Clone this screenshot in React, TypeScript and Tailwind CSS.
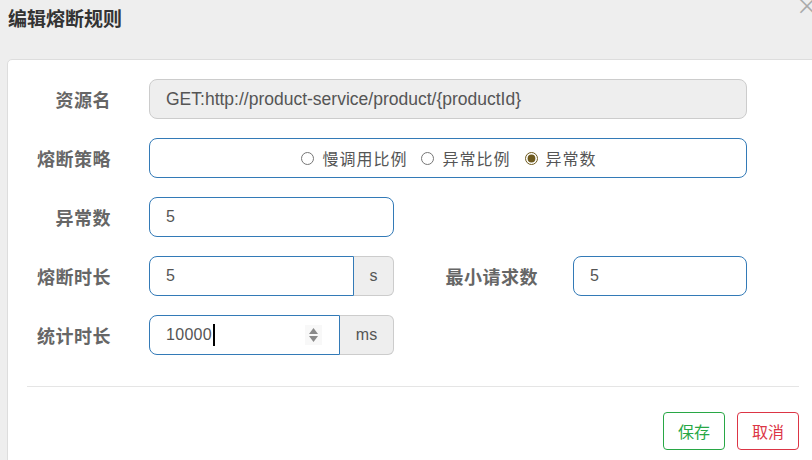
import React, { useState } from 'react';

const labelCls =
  'w-[84px] shrink-0 text-right text-[18px] font-bold text-[#666] leading-none tracking-[0.5px]';
const inputCls =
  'h-[40px] rounded-[8px] border border-[#337ab7] bg-white px-[16px] text-[16px] text-[#555] outline-none font-["Liberation_Sans",Arial,sans-serif]';
const addonCls =
  'flex h-[40px] items-center justify-center rounded-r-[6px] border border-l-0 border-[#ccc] bg-[#eee] text-[16px] text-[#555] font-["Liberation_Sans",Arial,sans-serif]';

const strategies = [
  { id: 'slow', label: '慢调用比例' },
  { id: 'ratio', label: '异常比例' },
  { id: 'count', label: '异常数' },
];

function Spinner() {
  return (
    <div className="absolute right-[18px] top-[10px] flex h-[20px] w-[17px] flex-col items-center justify-center gap-[2px] bg-[#f8f8f8]">
      <svg width="9" height="6" viewBox="0 0 9 6">
        <path d="M4.5 0 L9 6 L0 6 Z" fill="#8a8a8a" />
      </svg>
      <svg width="9" height="6" viewBox="0 0 9 6">
        <path d="M0 0 L9 0 L4.5 6 Z" fill="#8a8a8a" />
      </svg>
    </div>
  );
}

export default function App() {
  const [strategy, setStrategy] = useState('count');

  return (
    <div className='relative h-[460px] w-[812px] overflow-hidden bg-[#eee] font-["Noto_Sans_CJK_SC",sans-serif]'>
      <span className="absolute right-[-6px] top-[-7px] text-[22px] leading-none text-[#aaa]">×</span>

      <div className="h-[59px] px-[8px] pt-[6px]">
        <h4 className="text-[19px] font-bold leading-[24px] text-[#333] whitespace-nowrap">编辑熔断规则</h4>
      </div>

      <div className="ml-[7px] h-[420px] w-[813px] rounded-tl-[5px] border border-[#ddd] bg-white px-[19px] pt-[19px]">
        <form className="flex flex-col gap-[19px]" onSubmit={e => e.preventDefault()}>
          <div className="flex items-center gap-[38px]">
            <label className={labelCls}>资源名</label>
            <input
              className="h-[40px] w-[598px] rounded-[8px] border border-[#ccc] bg-[#eee] px-[16px] text-[17.5px] text-[#555] outline-none font-['Liberation_Sans',Arial,sans-serif]"
              value="GET:http://product-service/product/{productId}"
              disabled
              readOnly
            />
          </div>

          <div className="flex items-center gap-[38px]">
            <label className={labelCls}>熔断策略</label>
            <div className="flex h-[40px] w-[598px] items-center justify-center gap-[14px] rounded-[8px] border border-[#337ab7] bg-white pl-[2px]">
              {strategies.map(s => (
                <label key={s.id} className="flex items-center gap-[8px] text-[16px] tracking-[1px] text-[#555]">
                  <input
                    type="radio"
                    name="grade"
                    className="m-0 h-[13px] w-[13px] accent-[#6e5a1f]"
                    checked={strategy === s.id}
                    onChange={() => setStrategy(s.id)}
                  />
                  {s.label}
                </label>
              ))}
            </div>
          </div>

          <div className="flex items-center gap-[38px]">
            <label className={labelCls}>异常数</label>
            <input className={`${inputCls} w-[245px]`} defaultValue="5" />
          </div>

          <div className="flex items-center">
            <label className={labelCls}>熔断时长</label>
            <div className="ml-[38px] flex">
              <input className={`${inputCls} w-[205px] rounded-r-none`} defaultValue="5" />
              <span className={`${addonCls} w-[40px]`}>s</span>
            </div>
            <label className={`${labelCls} w-[144px]`}>最小请求数</label>
            <input className={`${inputCls} ml-[35px] w-[174px]`} defaultValue="5" />
          </div>

          <div className="flex items-center gap-[38px]">
            <label className={labelCls}>统计时长</label>
            <div className="flex">
              <div className="relative">
                <div className={`${inputCls} flex w-[191px] items-center rounded-r-none`}>
                  <span className="tracking-[0.3px]">10000</span>
                  <span className="ml-[1px] h-[22px] w-[1.5px] bg-black" />
                </div>
                <Spinner />
              </div>
              <span className={`${addonCls} w-[54px]`}>ms</span>
            </div>
          </div>

          <div className="mt-[12px] h-px w-[772px] bg-[#e5e5e5]" />

          <div className="mt-[6px] flex w-[772px] justify-end gap-[12px]">
            <button
              type="submit"
              className="h-[38px] w-[62px] rounded-[4px] border border-[#28a745] bg-white text-[16px] text-[#28a745]"
            >
              保存
            </button>
            <button
              type="button"
              className="h-[38px] w-[62px] rounded-[4px] border border-[#dc3545] bg-white text-[16px] text-[#dc3545]"
            >
              取消
            </button>
          </div>
        </form>
      </div>
    </div>
  );
}
